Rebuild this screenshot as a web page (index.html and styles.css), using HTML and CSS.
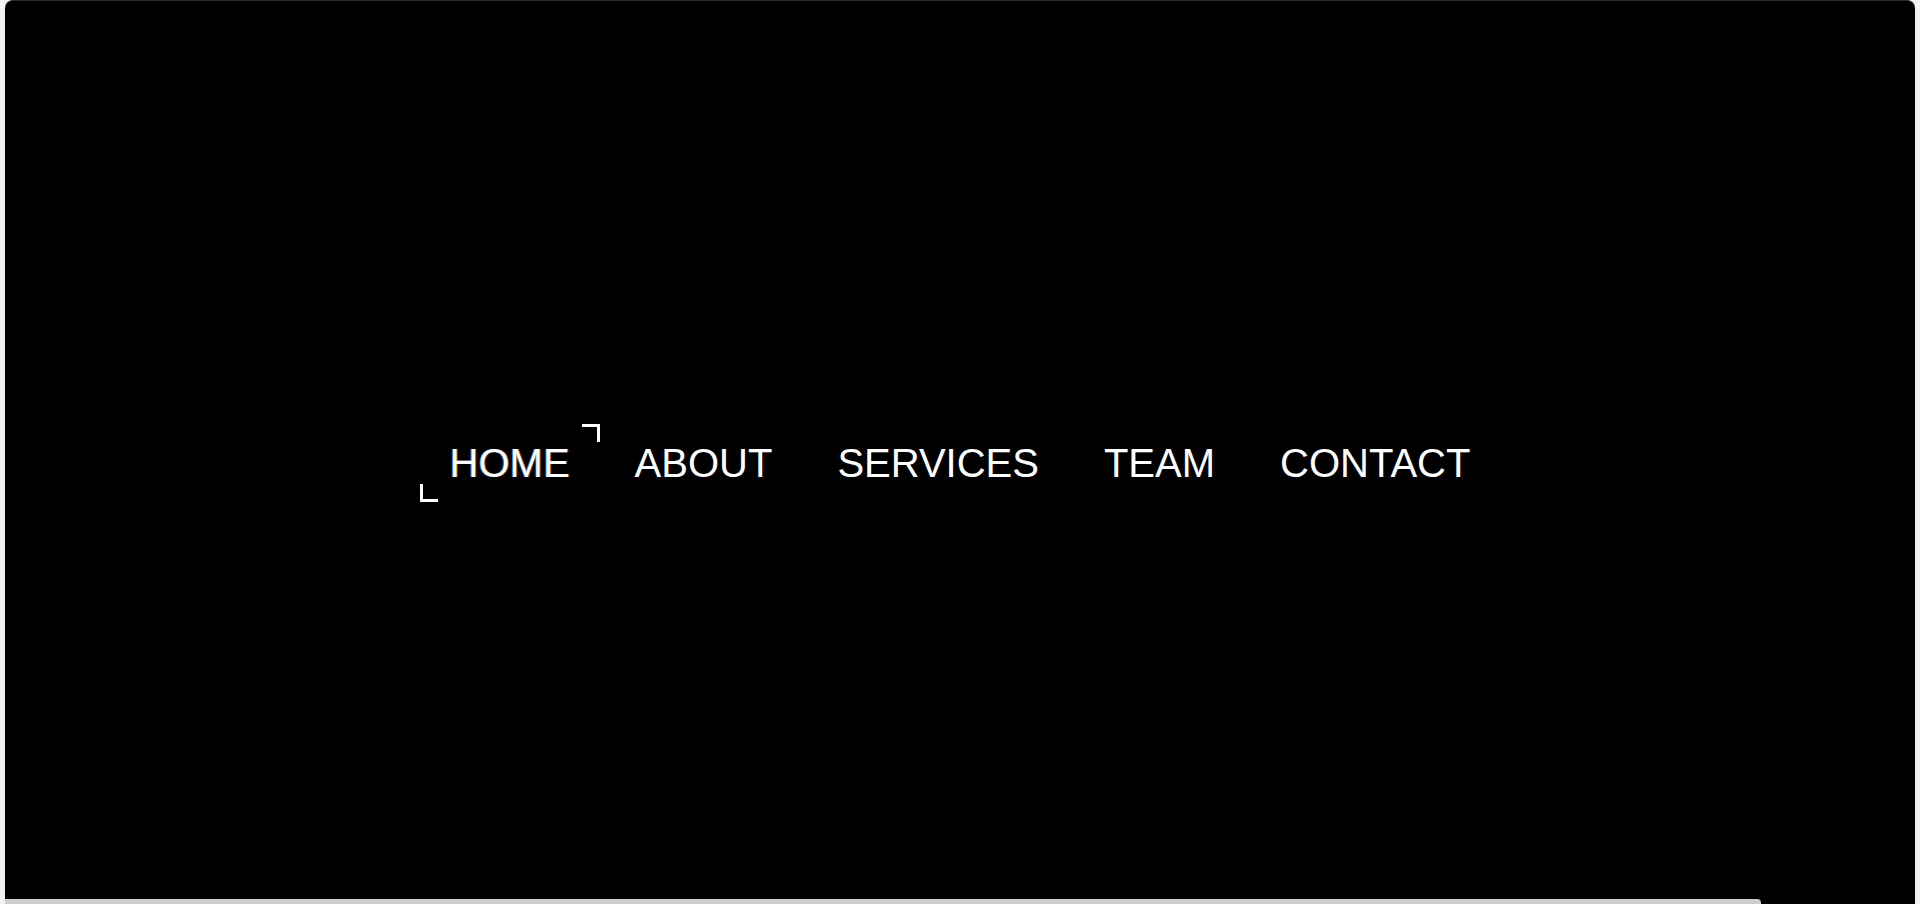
FILE: index.html
```html
<!DOCTYPE html>
<html lang="en">
<head>
<meta charset="utf-8">
<title>Nav</title>
<link rel="stylesheet" href="styles.css">
</head>
<body>
<div class="frame">
  <nav class="nav">
    <ul class="menu">
      <li><a class="link active" href="#">HOME</a></li>
      <li><a class="link" href="#">ABOUT</a></li>
      <li><a class="link" href="#">SERVICES</a></li>
      <li><a class="link" href="#">TEAM</a></li>
      <li><a class="link" href="#">CONTACT</a></li>
    </ul>
  </nav>
  <div class="scroll-thumb"></div>
</div>
</body>
</html>
```

FILE: styles.css
```css
html, body {
  margin: 0;
  padding: 0;
  height: 100%;
  background: #f2f2f2;
  overflow: hidden;
}

body {
  font-family: "Liberation Sans", Arial, sans-serif;
  padding: 0 5px;
  box-sizing: border-box;
}

.frame {
  position: relative;
  height: 904px;
  box-sizing: border-box;
  background: #000;
  border-top: 1px solid #2a2a2a;
  border-radius: 8px 8px 0 0;
  display: flex;
  flex-direction: column;
  justify-content: center;
  padding-top: 21px;
}

.nav {
  display: flex;
  justify-content: center;
}

.menu {
  list-style: none;
  margin: 0;
  padding: 0;
  display: flex;
  gap: 5px;
}

.link {
  position: relative;
  display: block;
  padding: 16px 30px;
  font-size: 40px;
  line-height: 46px;
  color: #fff;
  text-decoration: none;
}

.link.active {
  text-shadow: -1px 0 rgba(42, 157, 244, 0.55), 1px 0 rgba(240, 138, 36, 0.55);
}

.link.active::before,
.link.active::after {
  content: "";
  position: absolute;
  width: 18px;
  height: 18px;
  box-sizing: border-box;
}

.link.active::before {
  top: 0;
  right: 0;
  border-top: 3px solid #fff;
  border-right: 3px solid #fff;
}

.link.active::after {
  bottom: 0;
  left: 0;
  border-bottom: 3px solid #fff;
  border-left: 3px solid #fff;
}

.scroll-thumb {
  position: absolute;
  left: 0;
  bottom: 0;
  width: 1756px;
  height: 5px;
  background: #cdcdcd;
  border-radius: 0 4px 0 0;
}
```
